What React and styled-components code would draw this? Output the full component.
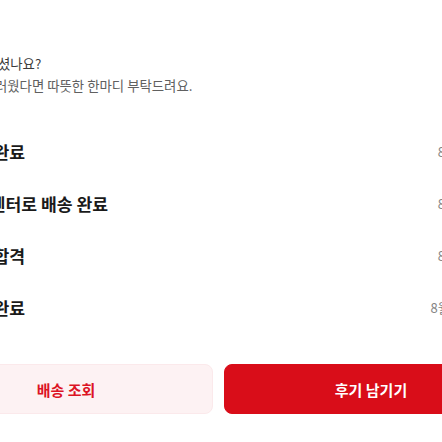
import React from "react";
import styled, { createGlobalStyle } from "styled-components";

const GlobalStyle = createGlobalStyle`
  html, body {
    margin: 0;
    padding: 0;
    background: #ffffff;
    overflow: hidden;
  }
  body {
    font-family: "Noto Sans CJK KR", "Noto Sans", sans-serif;
    color: #222222;
  }
`;

const Sheet = styled.div`
  width: 599px;
  margin-left: -81px;
  padding-top: 52px;
  display: flex;
  flex-direction: column;
`;

const Header = styled.div`
  padding: 0 39px;
  display: flex;
  flex-direction: column;
`;

const Question = styled.p`
  margin: 0;
  font-size: 13.4px;
  line-height: 22px;
  color: ${(p) => (p.$sub ? "#606060" : "#3c3c3c")};
  white-space: nowrap;
`;

const Timeline = styled.ul`
  list-style: none;
  margin: 29px 0 0;
  padding: 0 39px;
`;

const Step = styled.li`
  height: 52px;
  display: flex;
  align-items: center;
  justify-content: space-between;
`;

const StepName = styled.span`
  font-size: 17.2px;
  font-weight: 700;
  color: #1a1a1a;
  white-space: nowrap;
`;

const StepDate = styled.span`
  font-size: 13px;
  color: #858585;
  white-space: nowrap;
`;

const Actions = styled.div`
  margin-top: 31px;
  display: grid;
  grid-template-columns: 1fr 1fr;
  gap: 11px;
`;

const ActionButton = styled.button`
  height: 50px;
  border-radius: 8px;
  font-family: inherit;
  font-size: 15px;
  font-weight: 700;
  cursor: pointer;
  border: 1px solid ${(p) => (p.$primary ? "#d90d19" : "#fbe9eb")};
  background: ${(p) => (p.$primary ? "#d90d19" : "#fdf2f3")};
  color: ${(p) => (p.$primary ? "#ffffff" : "#dc1424")};
`;

const steps = [
  { name: "배송 완료", date: "8월 9일" },
  { name: "물류센터로 배송 완료", date: "8월 8일" },
  { name: "검수 합격", date: "8월 8일" },
  { name: "입고 완료", date: "8월 16일" },
];

export default function App() {
  return (
    <>
      <GlobalStyle />
      <Sheet>
        <Header>
          <Question>잘 받으셨나요?</Question>
          <Question $sub>만족스러웠다면 따뜻한 한마디 부탁드려요.</Question>
        </Header>
        <Timeline>
          {steps.map((s) => (
            <Step key={s.name}>
              <StepName>{s.name}</StepName>
              <StepDate>{s.date}</StepDate>
            </Step>
          ))}
        </Timeline>
        <Actions>
          <ActionButton>배송 조회</ActionButton>
          <ActionButton $primary>후기 남기기</ActionButton>
        </Actions>
      </Sheet>
    </>
  );
}
